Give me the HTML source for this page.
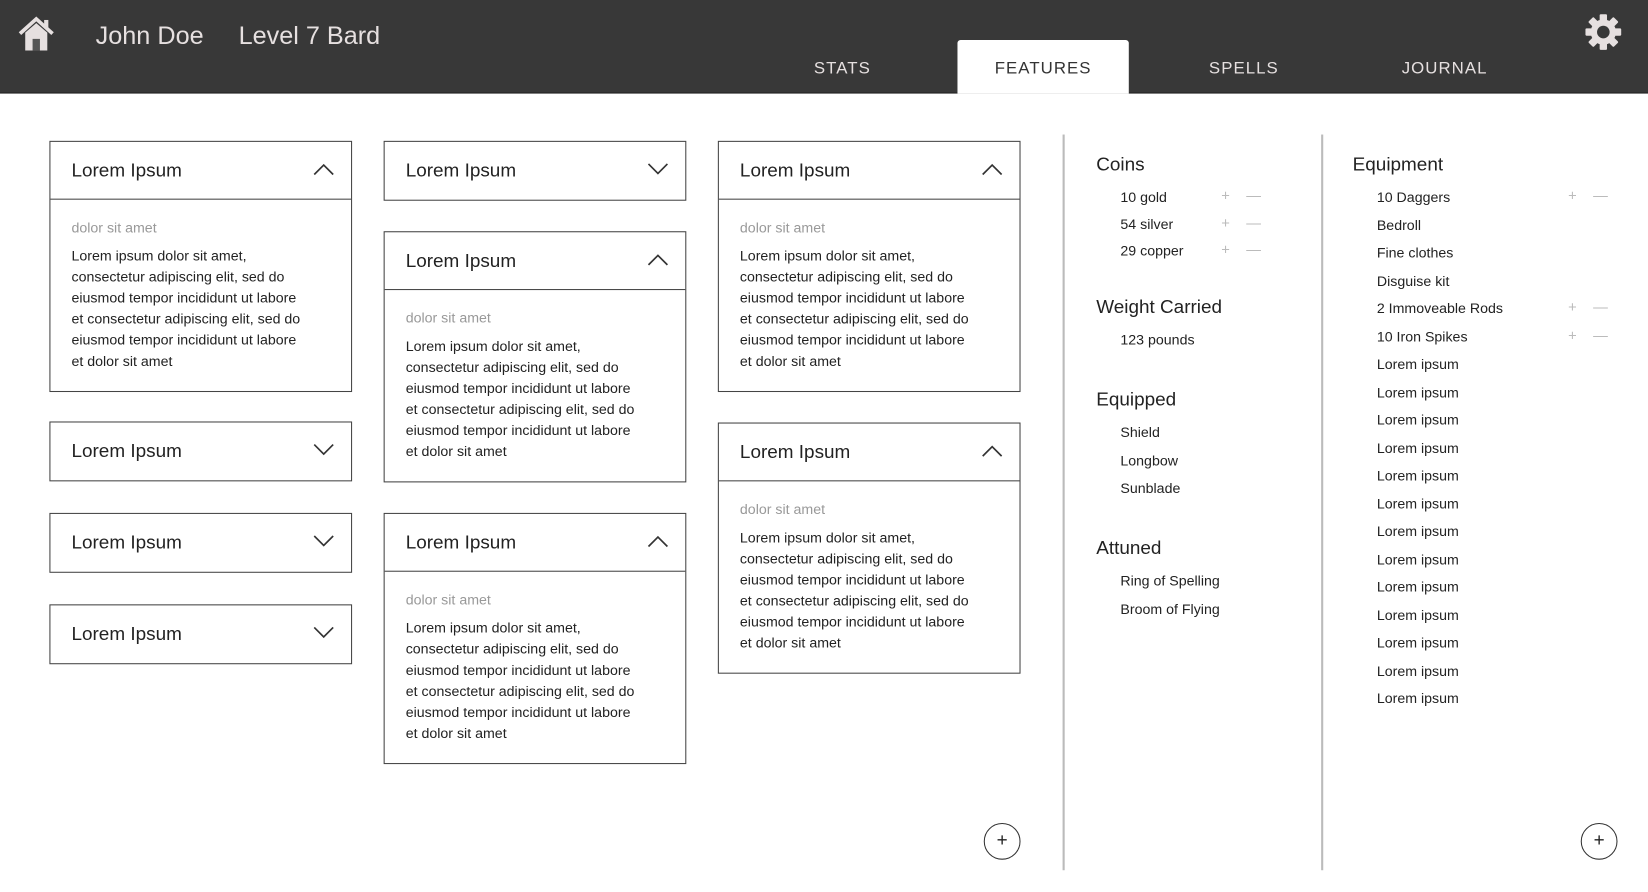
<!DOCTYPE html>
<html><head><meta charset="utf-8"><style>
*{margin:0;padding:0;box-sizing:border-box}
html,body{width:1648px;height:892px;overflow:hidden;background:#fff}
#w{position:absolute;left:0;top:0;width:1568px;height:849px;transform:scale(1.05102);transform-origin:0 0;font-family:"Liberation Sans",sans-serif;color:#222}
.hdr{position:absolute;left:0;top:0;width:1568px;height:89px;background:#383838;border-bottom:1px solid #222}
.t{position:absolute;color:#e6e0e0;font-size:24px;top:21px}
.tab{position:absolute;top:38px;height:51px;width:163px;text-align:center;line-height:56px;font-size:16px;letter-spacing:1px;color:#e6e0e0}
.tab.a{background:#fff;color:#333;border-radius:3px 3px 0 0}
.card{position:absolute;border:1.5px solid #444;background:#fff}
.ch{height:55px;position:relative;font-size:18px;line-height:55px;padding-left:20px;color:#222}
.card.o .ch{border-bottom:1.5px solid #444}
.ch svg{position:absolute;right:16px;top:20px}
.cb{padding:19px 20px 0 20px;font-size:13.5px}
.cb .s{color:#999;margin-bottom:10px}
.cb .p{line-height:20px;color:#222}
.sec{position:absolute;font-size:18px;color:#222;margin-top:1px}
.it{position:absolute;font-size:13.5px;color:#222;margin-top:1px}
.pm{position:absolute;font-size:14px;color:#bbb}
.vl{position:absolute;top:128px;width:1.5px;height:700px;background:#bbb}
.pc{position:absolute;width:35px;height:35px;border:1.5px solid #333;border-radius:50%;text-align:center;line-height:31px;font-size:18px}
</style></head><body><div id="w">
<div class="hdr">
<svg style="position:absolute;left:17px;top:15px" width="35" height="34" viewBox="0 0 35 34"><path d="M2 17 L17.5 3 L33 17" stroke="#e6e0e0" stroke-width="3.5" fill="none"/><rect x="25" y="4" width="4" height="8" fill="#e6e0e0"/><path d="M7 16 L17.5 7 L28 16 V33 H7Z" fill="#e6e0e0"/><rect x="14" y="22" width="7" height="11" fill="#555"/></svg>
<div class="t" style="left:91px">John Doe</div>
<div class="t" style="left:227px">Level 7 Bard</div>
<div class="tab" style="left:720px">STATS</div>
<div class="tab a" style="left:911px">FEATURES</div>
<div class="tab" style="left:1102px">SPELLS</div>
<div class="tab" style="left:1293px">JOURNAL</div>
<svg style="position:absolute;left:1508px;top:13px" width="35" height="35" viewBox="-17.5 -17.5 35 35"><g fill="#e6e0e0"><circle r="12"/><rect x="-3.5" y="-17" width="7" height="34" rx="1"/><rect x="-3.5" y="-17" width="7" height="34" rx="1" transform="rotate(45)"/><rect x="-3.5" y="-17" width="7" height="34" rx="1" transform="rotate(90)"/><rect x="-3.5" y="-17" width="7" height="34" rx="1" transform="rotate(135)"/></g><circle r="6" fill="#383838"/></svg>
</div>

<div class="card o" style="left:47px;top:134px;width:288px;height:239px"><div class="ch">Lorem Ipsum<svg width="20" height="12"><path d="M1 11 L10 2 L19 11" stroke="#333" stroke-width="1.6" fill="none"/></svg></div><div class="cb"><div class="s">dolor sit amet</div><div class="p">Lorem ipsum dolor sit amet,<br>consectetur adipiscing elit, sed do<br>eiusmod tempor incididunt ut labore<br>et consectetur adipiscing elit, sed do<br>eiusmod tempor incididunt ut labore<br>et dolor sit amet</div></div></div>
<div class="card" style="left:47px;top:401px;width:288px;height:57px"><div class="ch">Lorem Ipsum<svg width="20" height="12"><path d="M1 1 L10 10 L19 1" stroke="#333" stroke-width="1.6" fill="none"/></svg></div></div>
<div class="card" style="left:47px;top:488px;width:288px;height:57px"><div class="ch">Lorem Ipsum<svg width="20" height="12"><path d="M1 1 L10 10 L19 1" stroke="#333" stroke-width="1.6" fill="none"/></svg></div></div>
<div class="card" style="left:47px;top:575px;width:288px;height:57px"><div class="ch">Lorem Ipsum<svg width="20" height="12"><path d="M1 1 L10 10 L19 1" stroke="#333" stroke-width="1.6" fill="none"/></svg></div></div>

<div class="card" style="left:365px;top:134px;width:288px;height:57px"><div class="ch">Lorem Ipsum<svg width="20" height="12"><path d="M1 1 L10 10 L19 1" stroke="#333" stroke-width="1.6" fill="none"/></svg></div></div>
<div class="card o" style="left:365px;top:220px;width:288px;height:239px"><div class="ch">Lorem Ipsum<svg width="20" height="12"><path d="M1 11 L10 2 L19 11" stroke="#333" stroke-width="1.6" fill="none"/></svg></div><div class="cb"><div class="s">dolor sit amet</div><div class="p">Lorem ipsum dolor sit amet,<br>consectetur adipiscing elit, sed do<br>eiusmod tempor incididunt ut labore<br>et consectetur adipiscing elit, sed do<br>eiusmod tempor incididunt ut labore<br>et dolor sit amet</div></div></div>
<div class="card o" style="left:365px;top:488px;width:288px;height:239px"><div class="ch">Lorem Ipsum<svg width="20" height="12"><path d="M1 11 L10 2 L19 11" stroke="#333" stroke-width="1.6" fill="none"/></svg></div><div class="cb"><div class="s">dolor sit amet</div><div class="p">Lorem ipsum dolor sit amet,<br>consectetur adipiscing elit, sed do<br>eiusmod tempor incididunt ut labore<br>et consectetur adipiscing elit, sed do<br>eiusmod tempor incididunt ut labore<br>et dolor sit amet</div></div></div>

<div class="card o" style="left:683px;top:134px;width:288px;height:239px"><div class="ch">Lorem Ipsum<svg width="20" height="12"><path d="M1 11 L10 2 L19 11" stroke="#333" stroke-width="1.6" fill="none"/></svg></div><div class="cb"><div class="s">dolor sit amet</div><div class="p">Lorem ipsum dolor sit amet,<br>consectetur adipiscing elit, sed do<br>eiusmod tempor incididunt ut labore<br>et consectetur adipiscing elit, sed do<br>eiusmod tempor incididunt ut labore<br>et dolor sit amet</div></div></div>
<div class="card o" style="left:683px;top:402px;width:288px;height:239px"><div class="ch">Lorem Ipsum<svg width="20" height="12"><path d="M1 11 L10 2 L19 11" stroke="#333" stroke-width="1.6" fill="none"/></svg></div><div class="cb"><div class="s">dolor sit amet</div><div class="p">Lorem ipsum dolor sit amet,<br>consectetur adipiscing elit, sed do<br>eiusmod tempor incididunt ut labore<br>et consectetur adipiscing elit, sed do<br>eiusmod tempor incididunt ut labore<br>et dolor sit amet</div></div></div>
<div class="pc" style="left:936px;top:783px">+</div>

<div class="vl" style="left:1011px"></div>
<div class="vl" style="left:1257px"></div>

<div class="sec" style="left:1043px;top:145px">Coins</div>
<div class="it" style="left:1066px;top:179px">10 gold</div>
<div class="it" style="left:1066px;top:205px">54 silver</div>
<div class="it" style="left:1066px;top:230px">29 copper</div>
<div class="pm" style="left:1162px;top:178px">+&nbsp;&nbsp;&nbsp;&nbsp;—</div>
<div class="pm" style="left:1162px;top:204px">+&nbsp;&nbsp;&nbsp;&nbsp;—</div>
<div class="pm" style="left:1162px;top:229px">+&nbsp;&nbsp;&nbsp;&nbsp;—</div>
<div class="sec" style="left:1043px;top:281px">Weight Carried</div>
<div class="it" style="left:1066px;top:315px">123 pounds</div>
<div class="sec" style="left:1043px;top:369px">Equipped</div>
<div class="it" style="left:1066px;top:403px">Shield</div>
<div class="it" style="left:1066px;top:430px">Longbow</div>
<div class="it" style="left:1066px;top:456px">Sunblade</div>
<div class="sec" style="left:1043px;top:510px">Attuned</div>
<div class="it" style="left:1066px;top:544px">Ring of Spelling</div>
<div class="it" style="left:1066px;top:571px">Broom of Flying</div>

<div class="sec" style="left:1287px;top:145px">Equipment</div>
<div class="it" style="left:1310px;top:179px">10 Daggers</div>
<div class="it" style="left:1310px;top:206px">Bedroll</div>
<div class="it" style="left:1310px;top:232px">Fine clothes</div>
<div class="it" style="left:1310px;top:259px">Disguise kit</div>
<div class="it" style="left:1310px;top:285px">2 Immoveable Rods</div>
<div class="it" style="left:1310px;top:312px">10 Iron Spikes</div>
<div class="it" style="left:1310px;top:338px">Lorem ipsum</div>
<div class="it" style="left:1310px;top:365px">Lorem ipsum</div>
<div class="it" style="left:1310px;top:391px">Lorem ipsum</div>
<div class="it" style="left:1310px;top:418px">Lorem ipsum</div>
<div class="it" style="left:1310px;top:444px">Lorem ipsum</div>
<div class="it" style="left:1310px;top:471px">Lorem ipsum</div>
<div class="it" style="left:1310px;top:497px">Lorem ipsum</div>
<div class="it" style="left:1310px;top:524px">Lorem ipsum</div>
<div class="it" style="left:1310px;top:550px">Lorem ipsum</div>
<div class="it" style="left:1310px;top:577px">Lorem ipsum</div>
<div class="it" style="left:1310px;top:603px">Lorem ipsum</div>
<div class="it" style="left:1310px;top:630px">Lorem ipsum</div>
<div class="it" style="left:1310px;top:656px">Lorem ipsum</div>
<div class="pm" style="left:1492px;top:178px">+&nbsp;&nbsp;&nbsp;&nbsp;—</div>
<div class="pm" style="left:1492px;top:284px">+&nbsp;&nbsp;&nbsp;&nbsp;—</div>
<div class="pm" style="left:1492px;top:311px">+&nbsp;&nbsp;&nbsp;&nbsp;—</div>
<div class="pc" style="left:1504px;top:783px">+</div>
</div></body></html>
